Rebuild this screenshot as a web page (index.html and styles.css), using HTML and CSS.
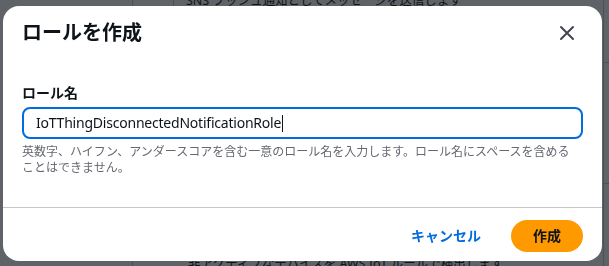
FILE: index.html
```html
<!DOCTYPE html>
<html lang="ja">
<head>
<meta charset="utf-8">
<title>ロールを作成</title>
<link rel="stylesheet" href="styles.css">
</head>
<body>
  <div class="page">
    <div class="page-col col-a"></div>
    <div class="page-col col-b"></div>
    <div class="page-col col-c">
      <p class="page-text top-text">SNS プッシュ通知としてメッセージを送信します</p>
      <p class="page-text bottom-text">非アクティブなデバイスを AWS IoT ルールで検出します</p>
    </div>
    <div class="page-col col-d">
      <div class="side-row"></div>
      <div class="side-row"></div>
    </div>
  </div>

  <div class="overlay">
    <div class="modal" role="dialog">
      <div class="modal-header">
        <h2 class="modal-title">ロールを作成</h2>
        <button class="close-btn" aria-label="閉じる">
          <svg width="16" height="16" viewBox="0 0 16 16"><path d="M2 2 L14 14 M14 2 L2 14" fill="none" stroke="#424650" stroke-width="2" stroke-linecap="round"/></svg>
        </button>
      </div>
      <div class="modal-body">
        <label class="field-label">ロール名</label>
        <div class="input">IoTThingDisconnectedNotificationRole<span class="caret"></span></div>
        <p class="hint">英数字、ハイフン、アンダースコアを含む一意のロール名を入力します。ロール名にスペースを含めることはできません。</p>
      </div>
      <div class="modal-footer">
        <button class="btn-link">キャンセル</button>
        <button class="btn-primary">作成</button>
      </div>
    </div>
  </div>
</body>
</html>
```

FILE: styles.css
```css
* { box-sizing: border-box; }

html, body {
  margin: 0;
  padding: 0;
  width: 609px;
  height: 266px;
  overflow: hidden;
  background: #ffffff;
  font-family: "Noto Sans", "Noto Sans CJK JP", sans-serif;
  color: #0f141a;
}

/* background page (under the overlay) */
.page {
  display: grid;
  grid-template-columns: 133px 41px 429px 6px;
  height: 266px;
  overflow: hidden;
}
.page-col { height: 100%; overflow: hidden; }
.col-a { border-right: 1px solid #c6c6cd; }
.col-b { border-right: 1px solid #c6c6cd; height: 30px; }
.col-c {
  display: flex;
  flex-direction: column;
  justify-content: space-between;
  padding-left: 12px;
}
.col-d {
  border-left: 1px solid #c6c6cd;
  padding-top: 62px;
}
.side-row {
  border-top: 1px solid #c6c6cd;
  height: 121px;
}
.page-text {
  margin: 0;
  font-size: 12.5px;
  line-height: 16px;
  white-space: nowrap;
  color: #0f141a;
}
.top-text { margin-top: -7px; }
.bottom-text { margin-bottom: -6px; padding-left: 2px; }

/* overlay + modal */
.overlay {
  position: fixed;
  inset: 0;
  background: rgba(15, 20, 26, 0.667);
  padding: 6px 7px 0 3px;
}
.modal {
  width: 599px;
  background: #ffffff;
  border-radius: 16px;
  overflow: hidden;
}

.modal-header {
  display: flex;
  align-items: center;
  justify-content: space-between;
  padding: 15px 19px 0 19px;
}
.modal-title {
  margin: 0;
  font-size: 20px;
  line-height: 24px;
  font-weight: 700;
  color: #0f141a;
}
.close-btn {
  border: 0;
  background: none;
  padding: 4px;
  margin: 0 4px 0 0;
  display: flex;
  cursor: pointer;
}

.modal-body {
  padding: 38px 19px 31px 19px;
  display: flex;
  flex-direction: column;
}
.field-label {
  font-size: 14px;
  line-height: 20px;
  font-weight: 700;
  color: #0f141a;
}
.input {
  margin-top: 4px;
  height: 32px;
  border: 2px solid #006ce0;
  border-radius: 8px;
  padding: 0 12px;
  font-size: 14px;
  letter-spacing: -0.22px;
  line-height: 28px;
  color: #0f141a;
  display: flex;
  align-items: center;
}
.caret {
  display: inline-block;
  width: 1px;
  height: 17px;
  background: #0f141a;
  margin-left: 1px;
}
.hint {
  margin: 5px 0 0 0;
  max-width: 553px;
  font-size: 12px;
  line-height: 16px;
  color: #656871;
}

.modal-footer {
  border-top: 1px solid #c6c6cd;
  padding: 12px 19px 9px 19px;
  display: flex;
  justify-content: flex-end;
  align-items: center;
  gap: 10px;
}
.btn-link {
  border: 0;
  background: none;
  font-family: inherit;
  font-size: 14px;
  line-height: 20px;
  font-weight: 700;
  color: #006ce0;
  padding: 6px 20px;
  cursor: pointer;
}
.btn-primary {
  border: 0;
  background: #ff9900;
  border-radius: 20px;
  font-family: inherit;
  font-size: 14px;
  line-height: 20px;
  font-weight: 700;
  color: #0f141a;
  height: 32px;
  padding: 0 22px;
  cursor: pointer;
}
```
